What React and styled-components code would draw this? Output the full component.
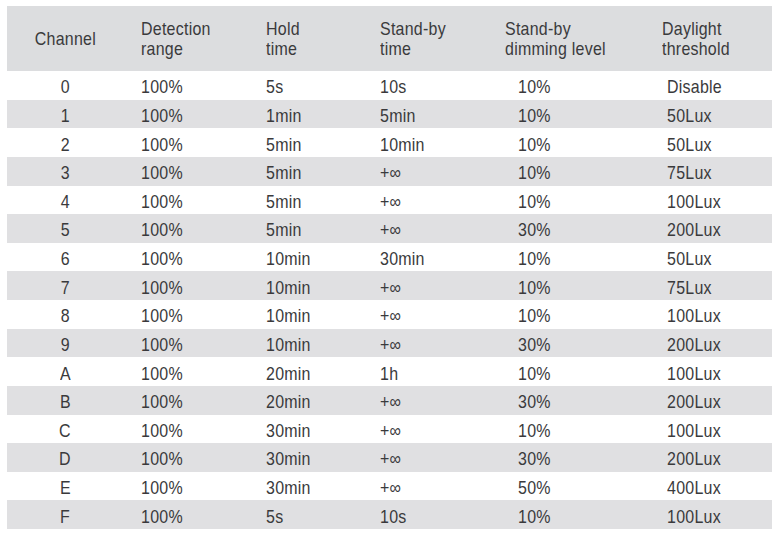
import React from "react";
import styled, { createGlobalStyle } from "styled-components";

const GlobalStyle = createGlobalStyle`
  html, body {
    margin: 0;
    padding: 0;
    background: #ffffff;
  }
  body {
    font-family: "Liberation Sans", Arial, sans-serif;
    color: #3a3a3c;
  }
`;

const columns = "134px 125px 114px 125px 157px 1fr";

const Page = styled.div`
  width: 777px;
  height: 533px;
  padding: 6px 5px 0 7px;
  box-sizing: border-box;
`;

const Table = styled.div`
  display: flex;
  flex-direction: column;
`;

const HeadRow = styled.div`
  display: grid;
  grid-template-columns: ${columns};
  align-items: center;
  height: 65px;
  background: #dcdddf;
`;

const HeadCell = styled.div`
  font-size: 19px;
  line-height: 20px;
  text-align: ${(p) => (p.$center ? "center" : "left")};
  padding-right: ${(p) => (p.$center ? "18px" : "0")};
  padding-top: 1px;
`;

const Row = styled.div`
  display: grid;
  grid-template-columns: ${columns};
  align-items: center;
  height: 28.625px;
  background: ${(p) => (p.$shade ? "#e0e0e2" : "#ffffff")};
`;

const Cell = styled.div`
  font-size: 19px;
  line-height: 20px;
  padding-top: 4px;
  text-align: ${(p) => (p.$center ? "center" : "left")};
  padding-right: ${(p) => (p.$center ? "18px" : "0")};
  padding-left: ${(p) => p.$indent || 0}px;
`;

/* condensed look: squeeze the Arial-width glyphs horizontally */
const Narrow = styled.span`
  display: inline-block;
  white-space: nowrap;
  letter-spacing: 0.3px;
  transform: scaleX(0.84);
  transform-origin: ${(p) => (p.$center ? "center" : "left")} center;
`;

const headers = [
  ["Channel"],
  ["Detection", "range"],
  ["Hold", "time"],
  ["Stand-by", "time"],
  ["Stand-by", "dimming level"],
  ["Daylight", "threshold"],
];

const rows = [
  ["0", "100%", "5s", "10s", "10%", "Disable"],
  ["1", "100%", "1min", "5min", "10%", "50Lux"],
  ["2", "100%", "5min", "10min", "10%", "50Lux"],
  ["3", "100%", "5min", "+∞", "10%", "75Lux"],
  ["4", "100%", "5min", "+∞", "10%", "100Lux"],
  ["5", "100%", "5min", "+∞", "30%", "200Lux"],
  ["6", "100%", "10min", "30min", "10%", "50Lux"],
  ["7", "100%", "10min", "+∞", "10%", "75Lux"],
  ["8", "100%", "10min", "+∞", "10%", "100Lux"],
  ["9", "100%", "10min", "+∞", "30%", "200Lux"],
  ["A", "100%", "20min", "1h", "10%", "100Lux"],
  ["B", "100%", "20min", "+∞", "30%", "200Lux"],
  ["C", "100%", "30min", "+∞", "10%", "100Lux"],
  ["D", "100%", "30min", "+∞", "30%", "200Lux"],
  ["E", "100%", "30min", "+∞", "50%", "400Lux"],
  ["F", "100%", "5s", "10s", "10%", "100Lux"],
];

const indents = [0, 0, 0, 0, 13, 5];

export default function App() {
  return (
    <>
      <GlobalStyle />
      <Page>
        <Table>
          <HeadRow>
            {headers.map((lines, i) => (
              <HeadCell key={i} $center={i === 0}>
                {lines.map((l, j) => (
                  <div key={j}>
                    <Narrow $center={i === 0}>{l}</Narrow>
                  </div>
                ))}
              </HeadCell>
            ))}
          </HeadRow>
          {rows.map((r, i) => (
            <Row key={i} $shade={i % 2 === 1}>
              {r.map((v, j) => (
                <Cell key={j} $center={j === 0} $indent={indents[j]}>
                  <Narrow $center={j === 0}>{v}</Narrow>
                </Cell>
              ))}
            </Row>
          ))}
        </Table>
      </Page>
    </>
  );
}
